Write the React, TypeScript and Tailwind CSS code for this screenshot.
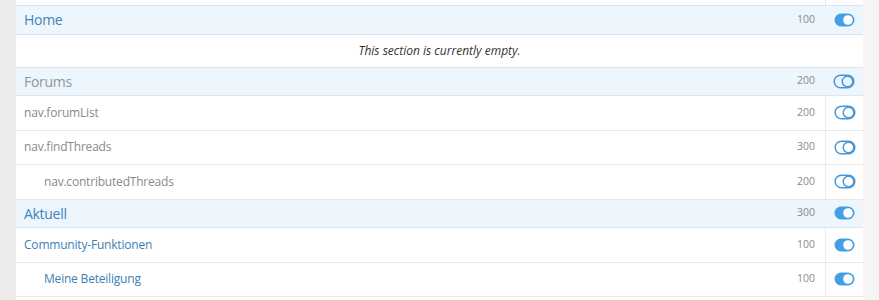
import React from "react";

type Row = {
  kind: "header" | "row" | "empty";
  label?: string;
  order?: number;
  on?: boolean;
  depth?: number;
};

const rows: Row[] = [
  { kind: "header", label: "Home", order: 100, on: true },
  { kind: "empty" },
  { kind: "header", label: "Forums", order: 200, on: false },
  { kind: "row", label: "nav.forumList", order: 200, on: false },
  { kind: "row", label: "nav.findThreads", order: 300, on: false },
  { kind: "row", label: "nav.contributedThreads", order: 200, on: false, depth: 1 },
  { kind: "header", label: "Aktuell", order: 300, on: true },
  { kind: "row", label: "Community-Funktionen", order: 100, on: true },
  { kind: "row", label: "Meine Beteiligung", order: 100, on: true, depth: 1 },
];

function Toggle({ on }: { on: boolean }) {
  if (on) {
    return (
      <svg width="21" height="14" viewBox="0 0 21 14">
        <rect x="0.5" y="0.5" width="20" height="13" rx="6.5" fill="#44a0e4" />
        <circle cx="14" cy="7" r="4.8" fill="#fff" />
      </svg>
    );
  }
  return (
    <svg width="22" height="15" viewBox="0 0 22 15">
      <rect x="1.2" y="1.2" width="19.6" height="12.6" rx="6.3" fill="none" stroke="#4898d8" strokeWidth="1.5" />
      <circle cx="14.5" cy="7.5" r="5.3" fill="none" stroke="#4898d8" strokeWidth="1.5" />
    </svg>
  );
}

export default function App() {
  return (
    <div className="flex w-[879px] h-[300px] overflow-hidden bg-[#eeeeee] font-['Open_Sans','Liberation_Sans',sans-serif]">
      <div className="w-4 shrink-0 bg-[#ececec]" />
      <div className="flex-1 flex flex-col bg-white">
        <div className="flex h-[6px] shrink-0 border-b border-[#dde6ef]">
          <div className="flex-1" />
          <div className="w-[38px] border-l border-[#e8e8e8]" />
        </div>
        {rows.map((r, i) => {
          if (r.kind === "empty") {
            return (
              <div key={i} className="h-[33px] shrink-0 flex items-center justify-center border-b border-[#dde6ef] text-[12px] italic text-[#333]">
                This section is currently empty.
              </div>
            );
          }
          if (r.kind === "header") {
            return (
              <div key={i} className="flex h-[28.5px] shrink-0 items-center bg-[#edf5fd] border-b border-[#dbe5ef]">
                <div className={`flex-1 pl-2 text-[14px] tracking-[-0.3px] ${r.on ? "text-[#4184ba]" : "text-[#8f959b]"}`}>{r.label}</div>
                <div className="pr-[10px] text-[10.5px] text-[#8c8c8c]">{r.order}</div>
                <div className="w-[38px] h-full flex items-center justify-center">
                  <Toggle on={!!r.on} />
                </div>
              </div>
            );
          }
          return (
            <div key={i} className="flex h-[34.5px] shrink-0 items-center border-b border-[#e7e7e7]">
              <div className={`flex-1 text-[12px] tracking-[-0.2px] ${r.depth ? "pl-7" : "pl-2"} ${r.on ? "text-[#3d7fb3]" : "text-[#8a8a8a]"}`}>{r.label}</div>
              <div className="pr-[10px] text-[10.5px] text-[#8c8c8c]">{r.order}</div>
              <div className="w-[38px] h-full flex items-center justify-center border-l border-[#ececec]">
                <Toggle on={!!r.on} />
              </div>
            </div>
          );
        })}
      </div>
      <div className="w-[16px] shrink-0 bg-[#f5f5f5]" />
    </div>
  );
}
